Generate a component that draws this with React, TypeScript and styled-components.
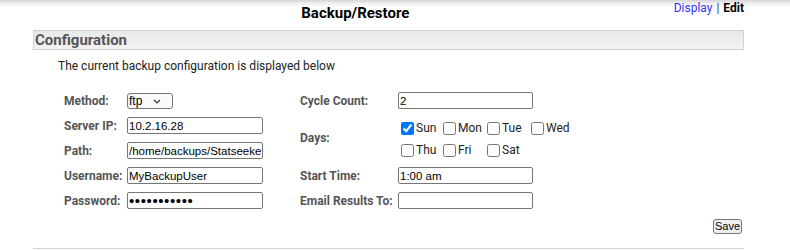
import styled, { createGlobalStyle } from "styled-components";

const GlobalStyle = createGlobalStyle`
    html {
        overflow: hidden;
        background: #fff linear-gradient(to bottom, #d6d6d6 0, #f4f4f4 4px, #fff 8px) no-repeat;
    }
    body {
        margin: 0;
        font-family: Roboto, "Liberation Sans", Arial, sans-serif;
        color: #222;
    }
`

const DAYS = [
    { name: 'Sun', checked: true },
    { name: 'Mon', checked: false },
    { name: 'Tue', checked: false },
    { name: 'Wed', checked: false },
    { name: 'Thu', checked: false },
    { name: 'Fri', checked: false },
    { name: 'Sat', checked: false },
]

export default function App() {
  return (
    <Page>
        <GlobalStyle/>
        <Header>
            <Title>Backup/Restore</Title>
            <Links>
                <DisplayLink href="#">Display</DisplayLink>
                <Pipe>|</Pipe>
                <Current>Edit</Current>
            </Links>
        </Header>

        <SectionBar>Configuration</SectionBar>
        <Intro>The current backup configuration is displayed below</Intro>

        <Form>
            <Label>Method:</Label>
            <Field>
                <SelectWrap>
                    <Select defaultValue="ftp">
                        <option value="ftp">ftp</option>
                        <option value="scp">scp</option>
                    </Select>
                    <Chevron viewBox="0 0 8 5" width="8" height="5">
                        <path d="M1 1l3 3 3-3" fill="none" stroke="#333" strokeWidth="1.2"/>
                    </Chevron>
                </SelectWrap>
            </Field>
            <Spacer/>
            <Label>Cycle Count:</Label>
            <Field><TextInput defaultValue="2"/></Field>

            <Label>Server IP:</Label>
            <Field><TextInput defaultValue="10.2.16.28"/></Field>
            <Spacer/>
            <Label $rows={2}>Days:</Label>
            <DaysCell $rows={2}>
                <DayGrid>
                    {DAYS.map((day) => (
                        <Day key={day.name}>
                            <Check type="checkbox" defaultChecked={day.checked}/>
                            {day.name}
                        </Day>
                    ))}
                </DayGrid>
            </DaysCell>

            <Label>Path:</Label>
            <Field><TextInput defaultValue="/home/backups/Statseeker"/></Field>
            <Spacer/>

            <Label>Username:</Label>
            <Field><TextInput defaultValue="MyBackupUser"/></Field>
            <Spacer/>
            <Label>Start Time:</Label>
            <Field><TextInput defaultValue="1:00 am"/></Field>

            <Label>Password:</Label>
            <Field><TextInput $secret type="password" defaultValue="secretpass1"/></Field>
            <Spacer/>
            <Label>Email Results To:</Label>
            <Field><TextInput defaultValue=""/></Field>
        </Form>

        <Actions>
            <SaveButton type="button">Save</SaveButton>
        </Actions>

        <NextBar/>
    </Page>
  );
}

/* ------ STYLE ------ */

const Page = styled.div`
    width: 711px;
    margin-left: 33px;
`
const Header = styled.div`
    display: grid;
    grid-template-columns: 1fr auto;
    height: 30px;
`
const Title = styled.h1`
    margin: 0;
    padding: 4px 0 0 4px;
    text-align: center;
    font-size: 15px;
    line-height: 18px;
    font-weight: 700;
    color: #000;
`
const Links = styled.div`
    margin-top: 1px;
    font-size: 12px;
    line-height: 14px;
`
const DisplayLink = styled.a`
    color: #3333ff;
    text-decoration: none;
`
const Pipe = styled.span`
    color: #333355;
    margin: 0 4px;
`
const Current = styled.span`
    font-weight: 700;
    color: #000;
`
const SectionBar = styled.div`
    height: 18px;
    padding-left: 1px;
    border: 1px solid #d2d2d2;
    background: linear-gradient(to bottom, #e7e8e8, #f3f3f3);
    font-size: 15px;
    line-height: 18px;
    font-weight: 700;
    color: #555;
`
const NextBar = styled.div`
    height: 1px;
    background: #d2d2d2;
`
const Intro = styled.p`
    margin: 9px 0 0 25px;
    font-size: 12px;
    line-height: 14px;
    color: #222;
`
const Form = styled.div`
    display: grid;
    grid-template-columns: 63px 136px 37px 98px 135px;
    grid-auto-rows: 25px;
    margin: 15px 0 0 31px;
`
const Label = styled.div<{ $rows?: number }>`
    grid-row: span ${p => p.$rows ?? 1};
    display: flex;
    align-items: center;
    font-size: 12px;
    font-weight: 700;
    color: #555;
    white-space: nowrap;
`
const Field = styled.div`
    display: flex;
    align-items: center;
`
const Spacer = styled.div``
const DaysCell = styled.div<{ $rows?: number }>`
    grid-row: span ${p => p.$rows ?? 1};
    display: flex;
    align-items: center;
`
const DayGrid = styled.div`
    display: grid;
    grid-template-columns: 42px 44px 44px auto;
    grid-auto-rows: 22px;
    margin-top: 2px;
`
const Day = styled.label`
    display: flex;
    align-items: center;
    font-size: 12px;
    color: #222;
    white-space: nowrap;
`
const Check = styled.input`
    width: 13px;
    height: 13px;
    margin: 0 2px 0 3px;
`
const TextInput = styled.input<{ $secret?: boolean }>`
    box-sizing: border-box;
    width: 100%;
    height: 17px;
    margin: 0;
    padding: 0 1px;
    border: 1px solid #767676;
    border-radius: 2px;
    font-family: "Liberation Sans", Arial, sans-serif;
    font-size: ${p => (p.$secret ? '15px' : '11.5px')};
    letter-spacing: ${p => (p.$secret ? '0.6px' : 'normal')};
    color: #000;
`
const SelectWrap = styled.div`
    position: relative;
    display: flex;
`
const Select = styled.select`
    box-sizing: border-box;
    width: 46px;
    height: 16px;
    margin: 0;
    padding: 0 0 0 1px;
    appearance: none;
    border: 1px solid #767676;
    border-radius: 3px;
    background: #fafafa;
    font-family: "Liberation Sans", Arial, sans-serif;
    font-size: 12px;
    line-height: 14px;
    color: #000;
`
const Chevron = styled.svg`
    position: absolute;
    top: 6px;
    left: 26px;
    pointer-events: none;
`
const Actions = styled.div`
    display: flex;
    justify-content: flex-end;
    margin-top: 6px;
    padding-right: 2px;
`
const SaveButton = styled.button`
    box-sizing: border-box;
    height: 15px;
    padding: 0 1px;
    margin: 0 0 14px;
    border: 1px solid #767676;
    border-radius: 3px;
    background: #efefef;
    font-family: "Liberation Sans", Arial, sans-serif;
    font-size: 11px;
    line-height: 13px;
    color: #000;
`
